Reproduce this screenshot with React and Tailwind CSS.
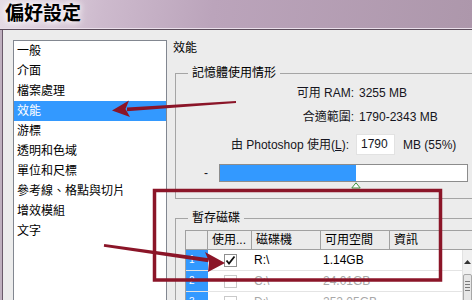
import React from "react";

const menu = [
  "一般",
  "介面",
  "檔案處理",
  "效能",
  "游標",
  "透明和色域",
  "單位和尺標",
  "參考線、格點與切片",
  "增效模組",
  "文字",
];

const disks = [
  { n: "1", drive: "R:\\", free: "1.14GB", on: true },
  { n: "2", drive: "C:\\", free: "24.01GB", on: false },
  { n: "3", drive: "D:\\", free: "252.05GB", on: false },
];

function CheckBox({ on }) {
  return (
    <div
      className={`w-[13px] h-[13px] border bg-white flex items-center justify-center ${
        on ? "border-[#8f8f8f]" : "border-[#c9c9c9]"
      }`}
    >
      {on && (
        <svg width="11" height="11" viewBox="0 0 11 11">
          <path d="M1.5 5.5 L4 8.5 L9.5 1.5" fill="none" stroke="#111" strokeWidth="1.8" />
        </svg>
      )}
    </div>
  );
}

function Annotations() {
  return (
    <svg className="absolute left-0 top-0 pointer-events-none" width="472" height="300" viewBox="0 0 472 300">
      <polygon points="236,101 236,103 127,111.2 127,107.4" fill="#8b1528" />
      <polygon points="112,110.5 129,100.5 125.5,109 130,117" fill="#8b1528" />
      <polygon points="104.2,244 103.8,246.8 208.3,262.3 208.9,258.2" fill="#8b1528" />
      <polygon points="225,263 205,252 209,261.5 208,272" fill="#8b1528" />
      <rect x="154.5" y="190.5" width="286" height="89.5" fill="none" stroke="#8b1528" strokeWidth="3.5" />
    </svg>
  );
}

export default function App() {
  return (
    <div className="relative w-[472px] h-[300px] overflow-hidden bg-[#ececec] text-[12px] leading-[16px] text-[#151520] [font-family:'Liberation_Sans','Noto_Sans_CJK_TC',sans-serif]">
      <div className="h-[28px] flex items-center pl-[5px] bg-[linear-gradient(100deg,#e6dce6_0%,#cdbacd_22%,#bba4bb_45%,#ad97ab_100%)]">
        <span className="text-[19px] leading-[24px] font-bold text-black [text-shadow:0_0_6px_#fff,0_0_10px_#fff]">偏好設定</span>
      </div>
      <div className="h-px bg-[#eadfea]" />
      <div className="h-px bg-[#5a4b5a]" />

      <div className="flex h-[270px]">
        <div className="w-[3px] shrink-0 bg-[#bfb0bf] border-r border-[#6a5a6a]" />

        <div className="ml-[10px] mt-[10px] w-[154px] shrink-0 h-[300px] border border-[#828790] bg-white">
          {menu.map((m, i) => (
            <div
              key={m}
              className={`h-[20px] leading-[20px] pl-[3px] ${i === 3 ? "bg-[#3399ff] text-white" : "text-black"}`}
            >
              {m}
            </div>
          ))}
        </div>

        <div className="flex-1 min-w-0 pl-[6px] pt-[10px]">
          <div className="leading-[16px] text-black">效能</div>

          <fieldset className="mt-[9px] ml-[2px] w-[320px] border border-[#a5a5a5]">
            <legend className="ml-[12px] px-[4px] leading-[16px] text-black">記憶體使用情形</legend>
            <div className="mt-[2px] h-[20px] flex items-center">
              <span className="w-[178px] text-right">可用 RAM:</span>
              <span className="ml-[5px]">3255 MB</span>
            </div>
            <div className="mt-[4px] h-[20px] flex items-center">
              <span className="w-[178px] text-right">合適範圍:</span>
              <span className="ml-[5px]">1790-2343 MB</span>
            </div>
            <div className="mt-[7px] h-[21px] flex items-center">
              <span className="w-[173px] text-right">
                由 Photoshop 使用(<span className="underline">L</span>):
              </span>
              <div className="ml-[7px] w-[39px] h-[21px] bg-white border border-[#e2e2e2] pl-[4px] leading-[19px]">1790</div>
              <span className="ml-[8px]">MB (55%)</span>
            </div>
            <div className="mt-[9px] mb-[16px] h-[18px] flex items-center">
              <span className="w-[43px] pl-[28px]">-</span>
              <div className="relative w-[249px] h-[18px] border border-[#8c8c8c] bg-white">
                <div className="w-[136px] h-full bg-[#3399ff]" />
                <svg className="absolute left-[131px] top-[17px]" width="10" height="7" viewBox="0 0 10 7">
                  <polygon points="5,0.8 9.2,6 0.8,6" fill="#fff" stroke="#3f8f3f" strokeWidth="1" />
                </svg>
              </div>
            </div>
          </fieldset>

          <fieldset className="mt-[11px] ml-[2px] w-[320px] h-[120px] border border-[#a5a5a5]">
            <legend className="ml-[12px] px-[4px] leading-[16px] text-black">暫存磁碟</legend>
            <div className="mt-[4px] ml-[9px] w-[287px] border-l border-t border-[#a0a0a0] bg-white">
              <div className="h-[19px] flex bg-[#ebebeb] border-b border-[#a0a0a0] leading-[18px] text-black">
                <div className="w-[22px] border-r border-[#a0a0a0]" />
                <div className="w-[44px] pl-[4px] border-r border-[#a0a0a0]">使用...</div>
                <div className="w-[69px] pl-[4px] border-r border-[#a0a0a0]">磁碟機</div>
                <div className="w-[69px] pl-[4px] border-r border-[#a0a0a0]">可用空間</div>
                <div className="flex-1 pl-[4px]">資訊</div>
              </div>
              <div className="flex">
                <div className="flex-1">
                  {disks.map((d) => (
                    <div key={d.n} className="h-[21px] flex border-b border-[#e4e4e4]">
                      <div className="w-[22px] bg-[#3399ff] text-white text-[10px] leading-[20px] pl-[3px]">{d.n}</div>
                      <div className="w-[44px] flex items-center justify-center">
                        <CheckBox on={d.on} />
                      </div>
                      <div className={`w-[69px] pl-[2px] leading-[20px] ${d.on ? "text-black" : "text-[#a8a8a8]"}`}>{d.drive}</div>
                      <div className={`w-[69px] pl-[2px] leading-[20px] ${d.on ? "text-black" : "text-[#a8a8a8]"}`}>{d.free}</div>
                      <div className="flex-1" />
                    </div>
                  ))}
                </div>
                <div className="w-[10px] bg-[#f0f0f0] border-l border-[#e2e2e2] flex flex-col items-center">
                  <div className="h-[24px] flex items-center justify-center">
                    <svg width="7" height="4" viewBox="0 0 7 4">
                      <polygon points="3.5,0 7,4 0,4" fill="#333" />
                    </svg>
                  </div>
                  <div className="w-[9px] h-[40px] border border-[#a8a8a8] rounded-[2px] bg-[#e6e6e6] flex flex-col items-center pt-[6px] gap-[2px]">
                    <div className="w-[5px] h-px bg-[#7a7a7a]" />
                    <div className="w-[5px] h-px bg-[#7a7a7a]" />
                    <div className="w-[5px] h-px bg-[#7a7a7a]" />
                    <div className="w-[5px] h-px bg-[#7a7a7a]" />
                  </div>
                </div>
              </div>
            </div>
          </fieldset>
        </div>
      </div>

      <Annotations />
    </div>
  );
}
